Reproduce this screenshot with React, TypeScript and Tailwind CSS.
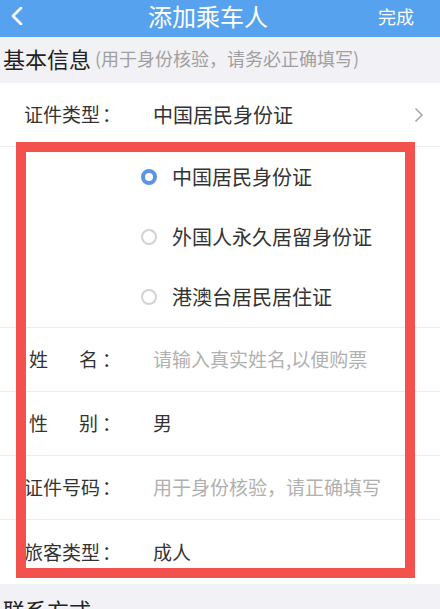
import React from 'react';

const font = { fontFamily: '"Noto Sans CJK SC", "Noto Sans", sans-serif' };

// radio dot, blue ring when checked
const Radio = ({ checked }: { checked?: boolean }) =>
    checked ? (
        <span className="w-[16px] h-[16px] rounded-full border-[4px] border-[#5b93e6] bg-white shrink-0" />
    ) : (
        <span className="w-[16px] h-[16px] rounded-full border-2 border-[#d2d2d2] bg-white shrink-0" />
    );

// labels are spread over a 4 char box, two-char ones sit a bit further in
const Label = ({ chars }: { chars: string[] }) => (
    <div className="w-[129px] shrink-0 flex items-center text-[19px] text-[#333]">
        <div className={`flex justify-between ${chars.length === 2 ? 'w-[69px] ml-[5px]' : 'w-[74px]'}`}>
            {chars.map((c, i) => (
                <span key={i}>{c}</span>
            ))}
        </div>
        <span className="ml-[4px]">：</span>
    </div>
);

const Row = ({ chars, value, placeholder, last }: { chars: string[]; value: string; placeholder?: boolean; last?: boolean }) => (
    <div className={`h-[64px] flex items-center pl-[24px] bg-white ${last ? '' : 'border-b border-[#ececec]'}`}>
        <Label chars={chars} />
        <span className={`text-[19px] ${placeholder ? 'text-[#b0b0b0]' : 'text-[#333]'}`}>{value}</span>
    </div>
);

export default function App() {
    const options = [
        { text: '中国居民身份证', checked: true },
        { text: '外国人永久居留身份证' },
        { text: '港澳台居民居住证' },
    ];

    return (
        <div className="relative w-[440px] h-[609px] overflow-hidden bg-[#f2f2f6]" style={font}>
            {/* header */}
            <div className="h-[37px] bg-[#57a2ef] flex items-start pt-[3px] px-[10px]">
                <svg width="14" height="18" viewBox="0 0 14 18" className="mt-[4px]">
                    <path d="M11 1 L3 9 L11 17" fill="none" stroke="white" strokeWidth="2.6" strokeLinecap="round" strokeLinejoin="round" />
                </svg>
                <div className="flex-1 text-center text-white text-[24px] leading-[26px] pl-[14px]">添加乘车人</div>
                <span className="text-white text-[18px] leading-[26px] mr-[16px]">完成</span>
            </div>

            {/* section title */}
            <div className="h-[46px] flex items-start pt-[6px] pl-[3px]">
                <span className="text-[22px] text-[#222] leading-[30px]">基本信息</span>
                <span className="text-[18px] text-[#a0a0a0] leading-[30px] ml-[4px]">(用于身份核验，请务必正确填写)</span>
            </div>

            {/* id type */}
            <div className="h-[64px] flex items-center pl-[24px] bg-white border-b border-[#ececec]">
                <Label chars={['证', '件', '类', '型']} />
                <span className="text-[20px] text-[#333] flex-1">中国居民身份证</span>
                <svg width="10" height="16" viewBox="0 0 10 16" className="mr-[16px]">
                    <path d="M1.5 1.5 L8 8 L1.5 14.5" fill="none" stroke="#a8a8a8" strokeWidth="1.6" />
                </svg>
            </div>

            {/* id type options */}
            <div className="bg-white border-b border-[#ececec]">
                {options.map((o) => (
                    <div key={o.text} className="h-[60px] flex items-center pl-[141px] gap-[15px]">
                        <Radio checked={o.checked} />
                        <span className="text-[20px] text-[#333]">{o.text}</span>
                    </div>
                ))}
            </div>

            <Row chars={['姓', '名']} value="请输入真实姓名,以便购票" placeholder />
            <Row chars={['性', '别']} value="男" />
            <Row chars={['证', '件', '号', '码']} value="用于身份核验，请正确填写" placeholder />
            <Row chars={['旅', '客', '类', '型']} value="成人" last />

            <div className="pt-[10px] pl-[3px] text-[22px] text-[#222] leading-[30px]">联系方式</div>

            {/* red annotation frame */}
            <div className="absolute left-[16px] top-[142px] w-[399px] h-[436px] border-[10px] border-[#f3514d] pointer-events-none" />
        </div>
    );
}
